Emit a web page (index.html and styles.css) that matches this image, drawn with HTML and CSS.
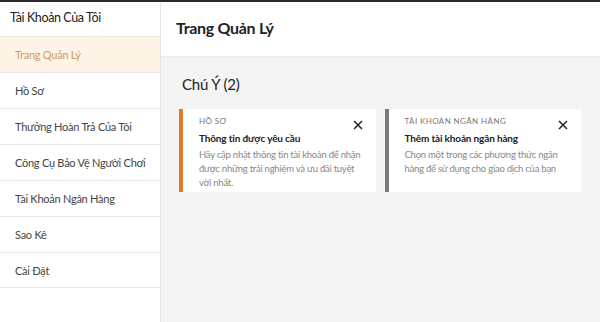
FILE: index.html
```html
<!DOCTYPE html>
<html lang="vi">
<head>
<meta charset="utf-8">
<link rel="stylesheet" href="styles.css">
</head>
<body>
<div class="topbar"></div>
<div class="layout">
  <aside class="sidebar">
    <div class="side-title">Tài Khoản Của Tôi</div>
    <nav class="menu">
      <div class="item active">Trang Quản Lý</div>
      <div class="item">Hồ Sơ</div>
      <div class="item">Thưởng Hoàn Trả Của Tôi</div>
      <div class="item">Công Cụ Bảo Vệ Người Chơi</div>
      <div class="item">Tài Khoản Ngân Hàng</div>
      <div class="item">Sao Kê</div>
      <div class="item">Cài Đặt</div>
    </nav>
  </aside>
  <main class="main">
    <header class="main-head">Trang Quản Lý</header>
    <section class="content">
      <h2 class="section-title">Chú Ý (2)</h2>
      <div class="cards">
        <div class="card orange">
          <div class="card-top">
            <div class="label">Hồ Sơ</div>
            <svg class="close" width="10" height="10" viewBox="0 0 10 10"><path d="M1 1L9 9M9 1L1 9" stroke="#222" stroke-width="1.5" fill="none"/></svg>
          </div>
          <div class="card-title">Thông tin được yêu cầu</div>
          <div class="card-desc">Hãy cập nhật thông tin tài khoản để nhận được những trải nghiệm và ưu đãi tuyệt vời nhất.</div>
        </div>
        <div class="card gray">
          <div class="card-top">
            <div class="label">Tài Khoản Ngân Hàng</div>
            <svg class="close" width="10" height="10" viewBox="0 0 10 10"><path d="M1 1L9 9M9 1L1 9" stroke="#222" stroke-width="1.5" fill="none"/></svg>
          </div>
          <div class="card-title">Thêm tài khoản ngân hàng</div>
          <div class="card-desc">Chọn một trong các phương thức ngân hàng để sử dụng cho giao dịch của bạn</div>
        </div>
      </div>
    </section>
  </main>
</div>
</body>
</html>
```
FILE: styles.css
```css
* { box-sizing: border-box; margin: 0; padding: 0; }
html, body { width: 600px; height: 322px; overflow: hidden; }
body { font-family: Lato, "Noto Sans", sans-serif; color: #222; background: #fff; display: flex; flex-direction: column; }
.topbar { height: 2px; background: #2a2a2a; flex: none; }
.layout { flex: 1; display: flex; min-height: 0; }
.sidebar { width: 161px; flex: none; border-right: 1px solid #e6e6e6; background: #fff; }
.side-title { height: 34px; padding: 8px 0 0 10px; font-size: 12.5px; letter-spacing: -0.4px; color: #222; }
.menu { display: flex; flex-direction: column; }
.item { height: 36px; display: flex; align-items: center; padding-left: 15px; font-size: 11px; letter-spacing: -0.25px; color: #444; border-top: 1px solid #e8e8e8; white-space: nowrap; }
.item:last-child { border-bottom: 1px solid #e8e8e8; }
.item.active { background: #fdf4e6; color: #d49a5c; border-top-color: #f0e6d6; }
.main { flex: 1; display: flex; flex-direction: column; background: #f4f4f4; }
.main-head { height: 55px; background: #fff; border-bottom: 1px solid #ececec; font-size: 16px; letter-spacing: -0.3px; font-weight: 700; padding: 16px 0 0 15px; color: #222; }
.content { padding: 18px 19px 0 18px; }
.section-title { font-size: 15px; letter-spacing: -0.2px; font-weight: 400; color: #222; padding-left: 3px; height: 34px; }
.cards { display: flex; gap: 9px; }
.card { flex: 1; height: 83px; background: #fff; padding: 6px 13px 0 16px; border-left: 4px solid #e07a2c; }
.card.gray { border-left-color: #7a7a7a; }
.card-top { display: flex; justify-content: space-between; align-items: flex-start; }
.label { font-size: 8px; letter-spacing: 0.4px; text-transform: uppercase; color: #777; line-height: 12px; }
.close { margin-top: 5px; }
.card-title { font-size: 10px; letter-spacing: -0.15px; font-weight: 700; color: #222; margin-top: 1px; line-height: 15px; }
.card-desc { font-size: 9.5px; letter-spacing: -0.25px; color: #888; line-height: 14px; margin-top: 2px; }
```
